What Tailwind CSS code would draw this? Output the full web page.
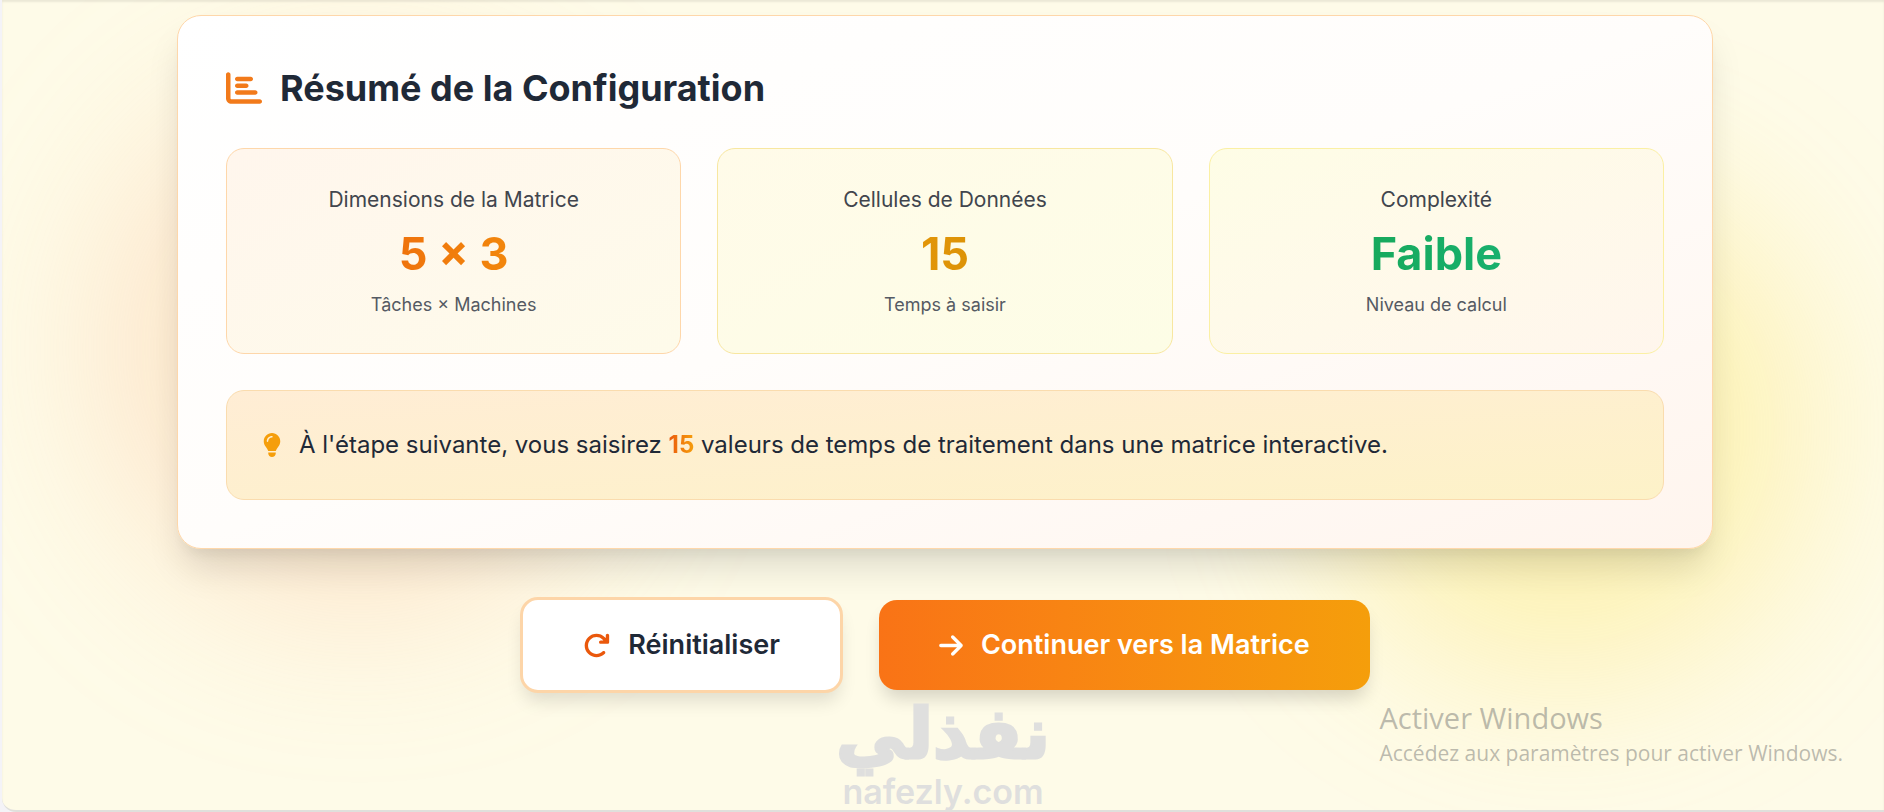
<!DOCTYPE html>
<html lang="fr">
<head>
  <meta charset="UTF-8">
  <meta name="viewport" content="width=device-width, initial-scale=1.0">
  <title>Résumé de la Configuration</title>
  <script src="https://cdn.jsdelivr.net/npm/@tailwindcss/browser@4"></script>
</head>
<body class="bg-[#f4f3f7] min-h-screen flex pl-[2px] font-['Inter',sans-serif] text-[#1f2937]">
  <div class="relative flex-1 min-h-screen overflow-hidden pl-1 bg-[#fefbe8] border-b-2 border-b-[#e0e0dc] rounded-bl-[14px] shadow-[inset_0_2px_2px_rgba(0,0,0,0.08)]">

    <!-- Background glows -->
    <div class="absolute left-[5%] top-[10%] w-[28%] h-[66%] rounded-full bg-[#fdba8c]/30 blur-[80px]"></div>
    <div class="absolute right-[4%] top-[22%] w-[26%] h-[62%] rounded-full bg-[#fde047]/32 blur-[80px]"></div>

    <main class="relative w-full max-w-[1536px] mx-auto pt-[15px]">
      <section class="rounded-3xl border border-[#fed7aa] bg-linear-to-br from-white via-[#fffdfb] to-[#fff5ee] p-12 shadow-[0_24px_36px_-6px_rgba(0,0,0,0.13),0_10px_12px_-5px_rgba(0,0,0,0.05)]">
        <h2 class="flex items-center gap-[18px] mb-9 text-[36px] leading-[48px] font-bold">
          <svg class="w-9 h-9 text-[#f27a1a]" viewBox="0 0 512 512" fill="currentColor"><path d="M32 32c17.7 0 32 14.3 32 32V400c0 8.8 7.2 16 16 16H480c17.7 0 32 14.3 32 32s-14.3 32-32 32H80c-44.2 0-80-35.8-80-80V64C0 46.3 14.3 32 32 32zm96 96c0-17.7 14.3-32 32-32l192 0c17.7 0 32 14.3 32 32s-14.3 32-32 32l-192 0c-17.7 0-32-14.3-32-32zm32 64H288c17.7 0 32 14.3 32 32s-14.3 32-32 32H160c-17.7 0-32-14.3-32-32s14.3-32 32-32zm0 96H416c17.7 0 32 14.3 32 32s-14.3 32-32 32H160c-17.7 0-32-14.3-32-32s14.3-32 32-32z"/></svg>
          Résumé de la Configuration
        </h2>

        <div class="grid grid-cols-3 gap-9 text-center">
          <div class="rounded-[18px] border border-[#fed7aa] bg-linear-to-br from-[#fff6ed] to-[#fefbea] p-9">
            <p class="text-[21px] leading-[30px] text-[#41454d]">Dimensions de la Matrice</p>
            <p class="my-[11px] text-[45px] leading-14 font-bold text-transparent bg-clip-text bg-linear-to-r from-[#ea580c] to-[#f59e0b]">5 × 3</p>
            <p class="text-[18px] leading-6 text-[#555a63]">Tâches × Machines</p>
          </div>
          <div class="rounded-[18px] border border-[#f8e7a0] bg-linear-to-br from-[#fffbe9] to-[#fdfde6] p-9">
            <p class="text-[21px] leading-[30px] text-[#41454d]">Cellules de Données</p>
            <p class="my-[11px] text-[45px] leading-14 font-bold text-transparent bg-clip-text bg-linear-to-r from-[#f59e0b] to-[#ca8a04]">15</p>
            <p class="text-[18px] leading-6 text-[#555a63]">Temps à saisir</p>
          </div>
          <div class="rounded-[18px] border border-[#fbf0a4] bg-linear-to-br from-[#fefde6] to-[#fff6ed] p-9">
            <p class="text-[21px] leading-[30px] text-[#41454d]">Complexité</p>
            <p class="my-[11px] text-[45px] leading-14 font-bold text-transparent bg-clip-text bg-linear-to-r from-[#16a34a] to-[#1ab67e]">Faible</p>
            <p class="text-[18px] leading-6 text-[#555a63]">Niveau de calcul</p>
          </div>
        </div>

        <div class="mt-9 flex items-center gap-[18px] rounded-[18px] border border-[#fadcae] bg-linear-to-br from-[#ffedd5] to-[#fdf2c8] p-9 text-[24px] leading-9">
          <svg class="w-[18px] h-6 text-[#f59e0b]" viewBox="0 0 384 512" fill="currentColor"><path d="M272 384c9.6-31.9 29.5-59.1 49.2-86.2l0 0c5.2-7.1 10.4-14.2 15.4-21.4c19.8-28.5 31.4-63 31.4-100.3C368 78.8 289.2 0 192 0S16 78.8 16 176c0 37.3 11.6 71.9 31.4 100.3c5 7.2 10.2 14.3 15.4 21.4l0 0c19.8 27.1 39.7 54.4 49.2 86.2H272zM192 512c44.2 0 80-35.8 80-80V416H112v16c0 44.2 35.8 80 80 80zM112 176c0 8.8-7.2 16-16 16s-16-7.2-16-16c0-61.9 50.1-112 112-112c8.8 0 16 7.2 16 16s-7.2 16-16 16c-44.2 0-80 35.8-80 80z"/></svg>
          <p>À l'étape suivante, vous saisirez <span class="font-bold text-transparent bg-clip-text bg-linear-to-r from-[#ea580c] to-[#f59e0b]">15</span> valeurs de temps de traitement dans une matrice interactive.</p>
        </div>
      </section>

      <div class="mt-12 flex items-center justify-center gap-9 text-[27px] leading-[42px] font-semibold">
        <button type="button" class="flex items-center gap-[18px] rounded-[18px] border-3 border-[#fdd5a8] bg-white px-15 py-6 shadow-[0_12px_18px_-4px_rgba(0,0,0,0.12)] cursor-pointer">
          <svg class="w-[27px] h-[27px] text-[#ea580c]" viewBox="0 0 512 512" fill="currentColor"><path d="M386.3 160H336c-17.7 0-32 14.3-32 32s14.3 32 32 32H464c17.7 0 32-14.3 32-32V64c0-17.7-14.3-32-32-32s-32 14.3-32 32v51.2L414.4 97.6c-87.5-87.5-229.3-87.5-316.8 0s-87.5 229.3 0 316.8s229.3 87.5 316.8 0c12.5-12.5 12.5-32.8 0-45.3s-32.8-12.5-45.3 0c-62.5 62.5-163.8 62.5-226.3 0s-62.5-163.8 0-226.3s163.8-62.5 226.3 0L386.3 160z"/></svg>
          Réinitialiser
        </button>
        <button type="button" class="flex items-center gap-[18px] rounded-[18px] bg-linear-to-r from-[#f97316] to-[#f59e0b] px-15 py-6 text-white shadow-[0_12px_18px_-4px_rgba(0,0,0,0.16)] cursor-pointer">
          <svg class="w-6 h-[27px]" viewBox="0 0 448 512" fill="currentColor"><path d="M438.6 278.6c12.5-12.5 12.5-32.8 0-45.3l-160-160c-12.5-12.5-32.8-12.5-45.3 0s-12.5 32.8 0 45.3L338.8 224 32 224c-17.7 0-32 14.3-32 32s14.3 32 32 32l306.7 0L233.4 393.4c-12.5 12.5-12.5 32.8 0 45.3s32.8 12.5 45.3 0l160-160z"/></svg>
          Continuer vers la Matrice
        </button>
      </div>
    </main>

    <!-- Watermarks over the page -->
    <div class="absolute bottom-0 inset-x-0 flex flex-col items-center text-[#dfdfde]">
      <span lang="ar" dir="rtl" class="font-['DejaVu_Sans',sans-serif] font-bold text-[70px] leading-20 [-webkit-text-stroke:3px_#dfdfde]">نفذلي</span>
      <span class="font-['Inter',sans-serif] font-semibold text-[34px] leading-9">nafezly.com</span>
    </div>
    <div class="absolute right-[41px] bottom-[42px] font-['Open_Sans',sans-serif] text-[#8f8f88]/60">
      <p class="text-[29px] leading-10">Activer Windows</p>
      <p class="text-[21px] leading-[30px]">Accédez aux paramètres pour activer Windows.</p>
    </div>
  </div>
</body>
</html>
